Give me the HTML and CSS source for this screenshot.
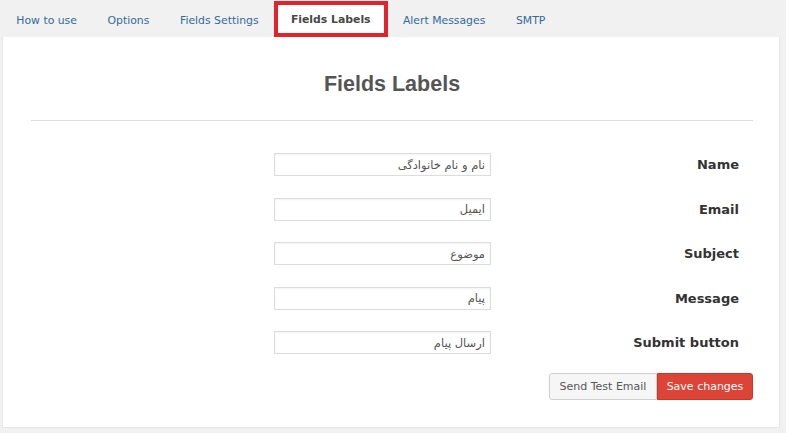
FILE: index.html
```html
<!DOCTYPE html>
<html lang="en">
<head>
<meta charset="utf-8">
<title>Fields Labels</title>
<link rel="stylesheet" href="styles.css">
</head>
<body>
<div class="page">
  <nav class="tabs">
    <a class="tab">How to use</a>
    <a class="tab">Options</a>
    <a class="tab">Fields Settings</a>
    <a class="tab active">Fields Labels</a>
    <a class="tab">Alert Messages</a>
    <a class="tab">SMTP</a>
  </nav>
  <section class="panel">
    <h1 class="title">Fields Labels</h1>
    <hr class="divider">
    <form class="form">
      <div class="row"><input class="field" type="text" value="نام و نام خانوادگی"><label class="label">Name</label></div>
      <div class="row"><input class="field" type="text" value="ایمیل"><label class="label">Email</label></div>
      <div class="row"><input class="field" type="text" value="موضوع"><label class="label">Subject</label></div>
      <div class="row"><input class="field" type="text" value="پیام"><label class="label">Message</label></div>
      <div class="row"><input class="field" type="text" value="ارسال پیام"><label class="label">Submit button</label></div>
    </form>
    <div class="actions">
      <button class="btn btn-default" type="button">Send Test Email</button>
      <button class="btn btn-primary" type="button">Save changes</button>
    </div>
  </section>
</div>
</body>
</html>
```
FILE: styles.css
```css
html, body {
  margin: 0;
  padding: 0;
  background: #f1f1f1;
  font-family: "DejaVu Sans", Verdana, sans-serif;
}
.page {
  padding: 1px 6px 0 2px;
}
.tabs {
  display: flex;
  height: 36px;
  margin-left: -1px;
}
.tab {
  display: flex;
  align-items: center;
  padding: 2px 15.3px 0;
  font-size: 10.85px;
  color: #336b98;
  text-decoration: none;
}
.tab.active {
  background: #fff;
  border: 4px solid #e2222c;
  padding: 0 13px;
  color: #484848;
  font-weight: bold;
}
.panel {
  background: #fff;
  border: 1px solid #e6e6e6;
  border-top: none;
  padding: 0 26px 27px 28px;
  height: 391px;
  box-sizing: border-box;
}
.title {
  margin: 0;
  padding-top: 34px;
  line-height: 26px;
  text-align: center;
  font-family: "Liberation Sans", Arial, sans-serif;
  font-size: 21.5px;
  font-weight: bold;
  color: #555;
}
.divider {
  margin: 23px 0 0;
  border: none;
  border-top: 1px solid #dedede;
  height: 0;
}
.form {
  display: flex;
  flex-direction: column;
  gap: 21.5px;
  margin-top: 32px;
  padding-right: 14px;
}
.row {
  display: flex;
  justify-content: flex-end;
  align-items: center;
}
.field {
  width: 217px;
  height: 23px;
  box-sizing: border-box;
  border: 1px solid #dcdcdc;
  box-shadow: inset 0 1px 2px rgba(0,0,0,0.05);
  direction: rtl;
  text-align: right;
  padding: 0 5px;
  font-family: "DejaVu Sans", sans-serif;
  font-size: 11.5px;
  color: #555;
  background: #fff;
  margin: 0;
}
.label {
  width: 248px;
  text-align: right;
  font-size: 13px;
  font-weight: bold;
  color: #333;
}
.actions {
  display: flex;
  justify-content: flex-end;
  margin-top: 19px;
}
.btn {
  height: 27px;
  margin: 0;
  box-sizing: border-box;
  font-family: "DejaVu Sans", sans-serif;
  font-size: 11px;
  border-radius: 3px;
  cursor: pointer;
}
.btn-default {
  width: 108px;
  background: #f6f6f6;
  border: 1px solid #cfcfcf;
  color: #555;
  border-radius: 3px 0 0 3px;
}
.btn-primary {
  width: 96px;
  background: #dc4437;
  border: 1px solid #c9372b;
  color: #fff;
  border-radius: 0 3px 3px 0;
}
```
